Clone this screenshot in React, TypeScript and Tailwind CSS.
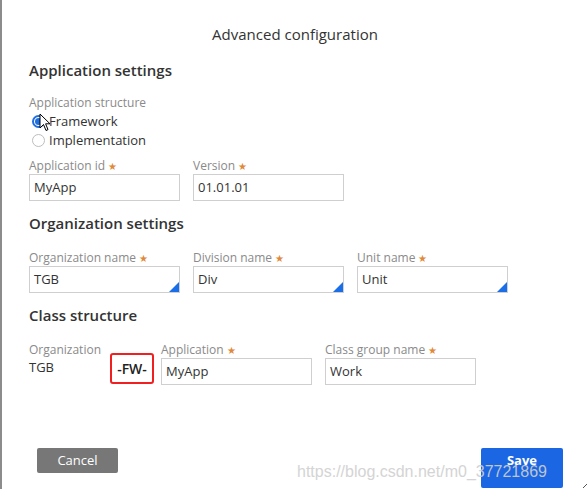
import React from 'react';

const font = { fontFamily: '"Open Sans", "Noto Sans", sans-serif' };

function Star() {
  return <span className="ml-[3px] text-[10px] leading-none text-[#e0893a]">★</span>;
}

function Field({ label, value, width = 'w-[151px]', corner = false }: { label: string; value: string; width?: string; corner?: boolean }) {
  return (
    <div className={width}>
      <div className="flex h-[16px] items-center text-[12px] text-[#8a8a8a]">
        {label}
        <Star />
      </div>
      <div className="relative flex h-[27px] items-center border border-[#cfcfcf] bg-white px-[4px] text-[13px] text-[#333]">
        {value}
        {corner && (
          <svg className="absolute bottom-0 right-0" width="10" height="10" viewBox="0 0 10 10">
            <polygon points="10,0 10,10 0,10" fill="#1a6ee8" />
          </svg>
        )}
      </div>
    </div>
  );
}

function Radio({ checked, label }: { checked?: boolean; label: string }) {
  return (
    <div className="flex h-[19px] items-center gap-[4px] text-[13px] text-[#333]">
      {checked ? (
        <span className="ml-[3px] flex h-[13px] w-[13px] items-center justify-center rounded-full border-2 border-[#1f6fe0] bg-white">
          <span className="h-[7px] w-[7px] rounded-full bg-[#1f6fe0]" />
        </span>
      ) : (
        <span className="ml-[3px] h-[13px] w-[13px] rounded-full border border-[#bdbdbd] bg-white" />
      )}
      <span>{label}</span>
    </div>
  );
}

export default function App() {
  return (
    <div style={font} className="relative h-[489px] w-[588px] overflow-hidden border-l-2 border-[#8c8c8c] bg-white">
      <div className="pt-[24px] text-center text-[15px] leading-[20px] text-[#333]">Advanced configuration</div>

      <div className="pl-[27px]">
        <h2 className="mt-[16px] text-[15px] font-semibold leading-[20px] text-[#333]">Application settings</h2>
        <div className="mt-[15px] h-[16px] text-[12px] leading-[16px] text-[#8a8a8a]">Application structure</div>
        <div className="relative mt-[1px]">
          <Radio checked label="Framework" />
          <Radio label="Implementation" />
          <svg className="absolute left-[10px] top-[1px]" width="12" height="19" viewBox="0 0 12 19">
            <path d="M1 1 L1 15 L4.5 11.5 L7 17.5 L9 16.6 L6.6 10.8 L11 10.8 Z" fill="#fff" stroke="#000" strokeWidth="1" strokeLinejoin="round" />
          </svg>
        </div>

        <div className="mt-[8px] flex gap-[13px]">
          <Field label="Application id" value="MyApp" />
          <Field label="Version" value="01.01.01" />
        </div>

        <h2 className="mt-[12px] text-[15px] font-semibold leading-[20px] text-[#333]">Organization settings</h2>
        <div className="mt-[17px] flex gap-[13px]">
          <Field label="Organization name" value="TGB" corner />
          <Field label="Division name" value="Div" corner />
          <Field label="Unit name" value="Unit" corner />
        </div>

        <h2 className="mt-[12px] text-[15px] font-semibold leading-[20px] text-[#333]">Class structure</h2>
        <div className="mt-[17px] flex items-start">
          <div className="w-[81px]">
            <div className="h-[16px] text-[12px] leading-[16px] text-[#8a8a8a]">Organization</div>
            <div className="text-[13px] leading-[18px] text-[#333]">TGB</div>
          </div>
          <div className="mt-[11px] flex h-[31px] w-[44px] items-center justify-center rounded-[3px] border-2 border-[#f02020] text-[14px] font-semibold text-[#222]">
            -FW-
          </div>
          <div className="ml-[7px] flex gap-[13px]">
            <Field label="Application" value="MyApp" />
            <Field label="Class group name" value="Work" />
          </div>
        </div>
      </div>

      <div className="mt-[63px] flex items-start justify-between pl-[35px] pr-[25px]">
        <button className="h-[25px] w-[81px] rounded-[2px] bg-[#777] text-[13px] text-white">Cancel</button>
        <button className="flex h-[40px] w-[82px] items-start justify-center rounded-[2px] bg-[#1a66e3] text-[13px] font-bold text-white">
          <div className="h-[25px] leading-[25px]">Save</div>
        </button>
      </div>

      <div
        className="pointer-events-none absolute left-[295px] top-[462px] text-[16px] leading-[20px] text-[#d0d0d0] opacity-90"
        style={{ fontFamily: '"Liberation Sans", Arial, sans-serif' }}
      >
        https://blog.csdn.net/m0_37721869
      </div>
      <svg className="absolute bottom-[1px] right-[1px]" width="4" height="4" viewBox="0 0 4 4">
        <path d="M0 4 L4 0" stroke="#555" strokeWidth="1" />
      </svg>
    </div>
  );
}
